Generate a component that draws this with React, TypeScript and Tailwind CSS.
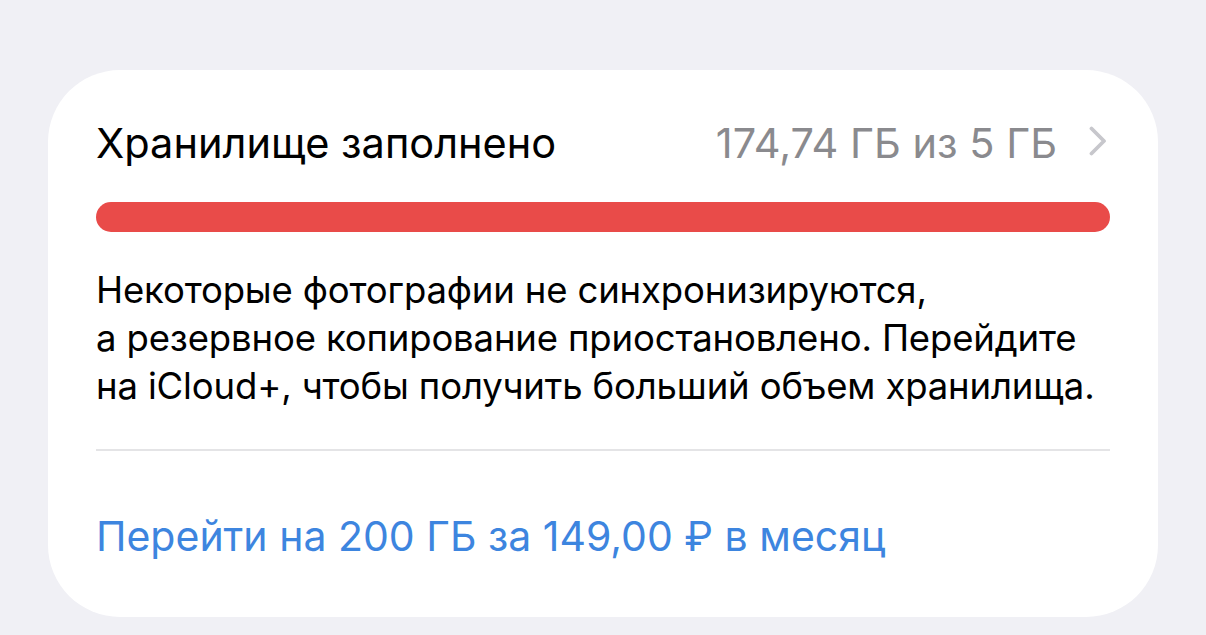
const Chevron = () => (
  <svg width="18" height="30" viewBox="0 0 18 30" fill="none" className="mr-[3px] -translate-y-[2px]">
    <path d="M2.5 2.5 L15 15 L2.5 27.5" stroke="#c7c7cc" strokeWidth="3.8" strokeLinecap="round" strokeLinejoin="round" />
  </svg>
);

const App = () => {
  return (
    <main
      className="w-[1206px] h-[635px] bg-[#f0f0f5] pt-[70px] px-[48px] overflow-hidden"
      style={{ fontFamily: 'Inter, "Noto Sans", sans-serif' }}
    >
      <section className="bg-white rounded-[72px] w-full h-[547px] px-[48px] pt-[48px] flex flex-col">
        <div className="flex items-center justify-between h-[50px]">
          <h2 className="text-[41.5px] leading-[50px] text-black">Хранилище заполнено</h2>
          <div className="flex items-center gap-[32px]">
            <span className="text-[41.5px] leading-[50px] text-[#8a8a8e]">174,74 ГБ из 5 ГБ</span>
            <Chevron />
          </div>
        </div>

        <div className="mt-[34px] h-[30px] w-full rounded-full bg-[#e94b49]" />

        <p className="mt-[34px] text-[36.5px] leading-[48px] tracking-[-0.15px] text-black whitespace-nowrap">
          Некоторые фотографии не синхронизируются,
          <br />
          а резервное копирование приостановлено. Перейдите
          <br />
          на iCloud+, чтобы получить больший объем хранилища.
        </p>

        <div className="mt-[39px] h-[2px] w-full bg-[#e4e4e6]" />

        <a className="mt-[60px] text-[41px] leading-[50px] text-[#3d85df]">
          Перейти на 200 ГБ за 149,00 ₽ в месяц
        </a>
      </section>
    </main>
  );
};

export default App;
